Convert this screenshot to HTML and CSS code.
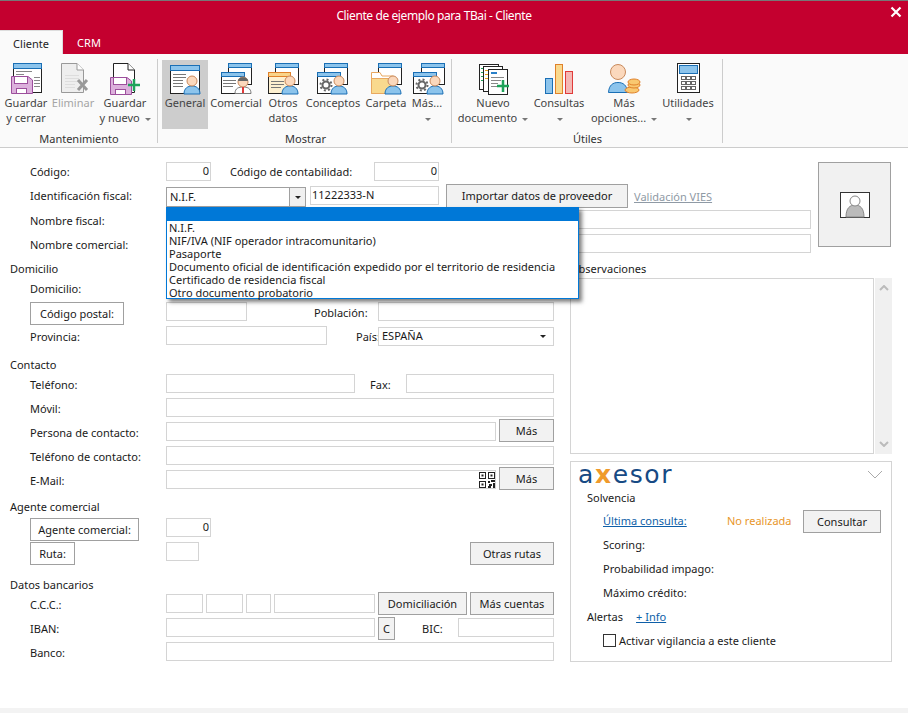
FILE: index.html
```html
<!DOCTYPE html>
<html lang="es">
<head>
<meta charset="utf-8">
<title>Cliente de ejemplo para TBai - Cliente</title>
<link rel="stylesheet" href="styles.css">
</head>
<body>
<svg class="sprite" aria-hidden="true">
  <defs>
    <g id="person"><path d="M-8 12C-8 6-4 4 0 4S8 6 8 12Z" fill="#8cc4ec" stroke="#1a6fb5"/><circle cy="-1" r="5" fill="#fbd8bc" stroke="#c98a5c"/></g>
    <g id="win"><rect x=".5" y=".5" width="23" height="21" fill="#fff" stroke="#222"/><rect x=".5" y=".5" width="23" height="4" fill="#8cc4ec" stroke="#1a6fb5"/></g>
    <g id="lines"><path d="M0 .5H13M0 3.5H13M0 6.5H10" stroke="#777" fill="none"/></g>
    <g id="gear"><circle r="3.5" fill="none" stroke="#666" stroke-width="2"/><circle r="5.5" fill="none" stroke="#666" stroke-width="2" stroke-dasharray="2 2.3"/></g>
    <g id="disk"><path d="M.5.5H17L21.500 4V17.500H.5Z" fill="#dcb0dc" stroke="#9c4f9c"/><rect x="3.500" y=".5" width="13" height="7" fill="#fff" stroke="#9c4f9c"/><rect x="5.500" y="12.500" width="10" height="5" fill="#fff" stroke="#9c4f9c"/></g>
  </defs>
</svg>

<header class="titlebar">
  <div class="caption">
    <span class="caption-text">Cliente de ejemplo para TBai - Cliente</span>
    <svg class="close" width="12" height="12" viewBox="0 0 12 12"><path d="M1.500 1.500L10.500 10.500M10.500 1.500L1.500 10.500" stroke="#fff" stroke-width="2.200"/></svg>
  </div>
  <nav class="tabs">
    <span class="tab tab-active">Cliente</span>
    <span class="tab">CRM</span>
  </nav>
</header>

<section class="ribbon">
  <div class="group group-a">
    <div class="buttons">
      <div class="rb w46">
        <svg class="ic" width="40" height="32" viewBox="0 0 40 32"><rect x="7.500" y=".5" width="28" height="29" fill="#fff" stroke="#222"/><rect x="7.500" y=".5" width="28" height="5" fill="#8cc4ec" stroke="#1a6fb5"/><path d="M10 8.500H26M10 11.500H18M28 14.500H34M28 17.500H34M28 20.500H34M28 23.500H34" stroke="#888"/><use href="#disk" x="5" y="13"/></svg>
        <span class="rt">Guardar</span><span class="rt">y cerrar</span>
      </div>
      <div class="rb w48 disabled">
        <svg class="ic" width="40" height="32" viewBox="0 0 40 32"><path d="M8.500.5H24L30.500 7V29.500H8.500Z" fill="#eee" stroke="#999"/><path d="M24 .5V7H30.500" fill="#fff" stroke="#999"/><path d="M12 12.500H26M12 15.500H26M12 18.500H26M12 21.500H22M12 24.500H22" stroke="#ddd"/><path d="M25 17L34 27M34 17L25 27" stroke="#999" stroke-width="3"/></svg>
        <span class="rt">Eliminar</span>
      </div>
      <div class="rb w56">
        <svg class="ic" width="40" height="32" viewBox="0 0 40 32"><path d="M8.500.5H23L29.500 7V29.500H8.500Z" fill="#fff" stroke="#222"/><path d="M23 .5V7H29.500" fill="#fff" stroke="#222"/><use href="#disk" x="5" y="14"/><path d="M29 16V28M23 22H35" stroke="#1fa35a" stroke-width="2.500"/></svg>
        <span class="rt">Guardar</span><span class="rt">y nuevo <i class="caret"></i></span>
      </div>
    </div>
    <div class="group-label">Mantenimiento</div>
  </div>

  <div class="group group-b">
    <div class="buttons">
      <div class="rb w46 selected">
        <svg class="ic" width="40" height="32" viewBox="0 0 40 32"><rect x="5.500" y="2.500" width="29" height="28" fill="#fff" stroke="#222"/><rect x="5.500" y="2.500" width="29" height="5" fill="#8cc4ec" stroke="#1a6fb5"/><use href="#lines" x="8" y="11"/><path d="M8 20.500H18M8 23.500H18" stroke="#777"/><use href="#person" x="27" y="19"/></svg>
        <span class="rt">General</span>
      </div>
      <div class="rb w56">
        <svg class="ic" width="40" height="32" viewBox="0 0 40 32"><use href="#win" x="12"/><use href="#win" x="5" y="9"/><use href="#lines" x="7" y="17"/><path d="M19 30.500C19 25 23 24 27 24S35 25 35 30.500Z" fill="#fff" stroke="#777"/><circle cx="27" cy="19" r="5" fill="#fbd8bc" stroke="#c98a5c"/><path d="M22 18C22 13 32 13 32 18Z" fill="#666"/><path d="M27 24V30" stroke="#e03a3a" stroke-width="2"/></svg>
        <span class="rt">Comercial</span>
      </div>
      <div class="rb w38">
        <svg class="ic" width="40" height="32" viewBox="0 0 40 32"><use href="#win" x="12"/><rect x="5.500" y="9.500" width="22" height="21" fill="#fdf0d0" stroke="#222"/><rect x="5.500" y="9.500" width="22" height="4" fill="#f9d48a" stroke="#e0812a"/><use href="#lines" x="8" y="18"/><use href="#person" x="27" y="19"/></svg>
        <span class="rt">Otros</span><span class="rt">datos</span>
      </div>
      <div class="rb w62">
        <svg class="ic" width="40" height="32" viewBox="0 0 40 32"><use href="#win" x="11"/><use href="#win" x="4" y="9"/><use href="#gear" x="13" y="22"/><use href="#person" x="26" y="19"/></svg>
        <span class="rt">Conceptos</span>
      </div>
      <div class="rb w44">
        <svg class="ic" width="40" height="32" viewBox="0 0 40 32"><use href="#win" x="12"/><path d="M5.500 30.500V9.500H14L16 13H27.500V30.500Z" fill="#fff" stroke="#e8a860"/><path d="M5.500 30.500V15.500H27.500V30.500Z" fill="#f9d98e" stroke="#e8a860"/><use href="#person" x="27" y="19"/></svg>
        <span class="rt">Carpeta</span>
      </div>
      <div class="rb w38">
        <svg class="ic" width="40" height="32" viewBox="0 0 40 32"><use href="#win" x="14"/><use href="#win" x="6" y="9"/><use href="#gear" x="15" y="22"/><use href="#person" x="28" y="19"/></svg>
        <span class="rt">Más...</span><span class="rt"><i class="caret"></i></span>
      </div>
    </div>
    <div class="group-label">Mostrar</div>
  </div>

  <div class="group group-c">
    <div class="buttons">
      <div class="rb w70">
        <svg class="ic" width="40" height="32" viewBox="0 0 40 32"><rect x="6.500" y="1.500" width="19" height="25" fill="#fff" stroke="#222"/><rect x="10.500" y="3.500" width="19" height="25" fill="#fff" stroke="#222"/><rect x="15.500" y="6.500" width="19" height="25" fill="#fff" stroke="#222"/><path d="M8 5.500H10M8 9.500H10M8 13.500H10M8 17.500H10" stroke="#1fa35a"/><path d="M12 7.500H15M12 11.500H15M12 15.500H15" stroke="#e8a020"/><path d="M18 10H24" stroke="#2a80c8" stroke-width="2"/><path d="M18 14.500H31M18 17.500H28M18 20.500H25M18 23.500H25" stroke="#888"/><path d="M30 17V29M24 23H36" stroke="#1fa35a" stroke-width="2.500"/></svg>
        <span class="rt">Nuevo</span><span class="rt">documento <i class="caret"></i></span>
      </div>
      <div class="rb w62">
        <svg class="ic" width="40" height="32" viewBox="0 0 40 32"><rect x="6.500" y="15.500" width="7" height="15" fill="#8cc4ec" stroke="#1a6fb5"/><rect x="16.500" y="1.500" width="7" height="29" fill="#f9d98e" stroke="#e0812a"/><rect x="26.500" y="8.500" width="7" height="22" fill="#f4b8b4" stroke="#e03a3a"/></svg>
        <span class="rt">Consultas</span><span class="rt"><i class="caret"></i></span>
      </div>
      <div class="rb w68">
        <svg class="ic" width="40" height="32" viewBox="0 0 40 32"><path d="M4.500 29.500C5 22 9 19.500 14 19.500S23 22 23.500 29.500Z" fill="#8cc4ec" stroke="#1a6fb5"/><circle cx="14" cy="9" r="7.500" fill="#fbd8bc" stroke="#c98a5c"/><g fill="#f9c870" stroke="#e0812a"><ellipse cx="28" cy="27" rx="7" ry="3"/><ellipse cx="30" cy="22" rx="6" ry="3"/><ellipse cx="30" cy="19" rx="6" ry="3"/></g></svg>
        <span class="rt">Más</span><span class="rt">opciones... <i class="caret"></i></span>
      </div>
      <div class="rb w60">
        <svg class="ic" width="40" height="32" viewBox="0 0 40 32"><rect x="9.500" y=".5" width="22" height="29" fill="#fff" stroke="#222"/><rect x="11.500" y="2.500" width="18" height="8" fill="#8cc4ec" stroke="#1a6fb5"/><g fill="#fff" stroke="#666"><rect x="13.500" y="13.500" width="4" height="3"/><rect x="18.500" y="13.500" width="4" height="3"/><rect x="23.500" y="13.500" width="4" height="3"/><rect x="13.500" y="18.500" width="4" height="3"/><rect x="18.500" y="18.500" width="4" height="3"/><rect x="23.500" y="18.500" width="4" height="3"/><rect x="13.500" y="23.500" width="4" height="3"/><rect x="18.500" y="23.500" width="4" height="3"/><rect x="23.500" y="23.500" width="4" height="3"/></g></svg>
        <span class="rt">Utilidades</span><span class="rt"><i class="caret"></i></span>
      </div>
    </div>
    <div class="group-label">Útiles</div>
  </div>
</section>

<main class="form">
  <div class="top">
    <div class="top-fields">
      <div class="row up">
        <span class="label">Código:</span>
        <div class="field num w45">0</div>
        <span class="label-inline">Código de contabilidad:</span>
        <div class="field num w65">0</div>
      </div>
      <div class="row up">
        <span class="label">Identificación fiscal:</span>
        <div class="combo w140"><span class="combo-text">N.I.F.</span><span class="combo-btn"><i class="caret dark"></i></span></div>
        <div class="field w129 ml4">11222333-N</div>
        <button class="btn btn-tall w182 ml7">Importar datos de proveedor</button>
        <a class="vies">Validación VIES</a>
      </div>
      <div class="row">
        <span class="label">Nombre fiscal:</span>
        <div class="field w645"></div>
      </div>
      <div class="row">
        <span class="label">Nombre comercial:</span>
        <div class="field w645"></div>
      </div>
    </div>
    <div class="photo">
      <svg width="30" height="26" viewBox="0 0 30 26"><rect x=".5" y=".5" width="29" height="25" fill="#fff" stroke="#333"/><path d="M6 25C6 16 10 13 15 13S24 16 24 25Z" fill="#bbb" stroke="#888"/><circle cx="15" cy="9" r="5" fill="#fff" stroke="#888"/></svg>
    </div>

    <div class="dropdown">
      <div class="dd-item dd-selected"></div>
      <div class="dd-item">N.I.F.</div>
      <div class="dd-item">NIF/IVA (NIF operador intracomunitario)</div>
      <div class="dd-item">Pasaporte</div>
      <div class="dd-item">Documento oficial de identificación expedido por el territorio de residencia</div>
      <div class="dd-item">Certificado de residencia fiscal</div>
      <div class="dd-item">Otro documento probatorio</div>
    </div>
  </div>

  <div class="lower">
    <div class="left">
      <div class="heading">Domicilio</div>
      <div class="row">
        <span class="label">Domicilio:</span>
        <div class="field grow"></div>
      </div>
      <div class="row">
        <span class="label label-btn"><button class="btn-label w94">Código postal:</button></span>
        <div class="field w81"></div>
        <span class="label-pob">Población:</span>
        <div class="field w176"></div>
      </div>
      <div class="row">
        <span class="label">Provincia:</span>
        <div class="field w161"></div>
        <span class="label-pais">País:</span>
        <div class="combo w176 combo-plain"><span class="combo-text">ESPAÑA</span><span class="combo-btn plain"><i class="caret dark"></i></span></div>
      </div>

      <div class="heading heading-contact">Contacto</div>
      <div class="row">
        <span class="label">Teléfono:</span>
        <div class="field w189"></div>
        <span class="label-fax">Fax:</span>
        <div class="field w148"></div>
      </div>
      <div class="row">
        <span class="label">Móvil:</span>
        <div class="field grow"></div>
      </div>
      <div class="row">
        <span class="label">Persona de contacto:</span>
        <div class="field w330"></div>
        <button class="btn b-up2 w55 ml3">Más</button>
      </div>
      <div class="row">
        <span class="label">Teléfono de contacto:</span>
        <div class="field grow"></div>
      </div>
      <div class="row">
        <span class="label">E-Mail:</span>
        <div class="field w330 qr-field">
          <svg class="qr" width="16" height="16" viewBox="0 0 16 16"><path d="M0 0H7V7H0ZM9 0H16V7H9ZM0 9H7V16H0Z" fill="#222"/><path d="M1 1H6V6H1ZM10 1H15V6H10ZM1 10H6V15H1Z" fill="#fff"/><path d="M2.500 2.500H4.500V4.500H2.500ZM11.500 2.500H13.500V4.500H11.500ZM2.500 11.500H4.500V13.500H2.500ZM9 9H11V11H9ZM12 8H16V10H12ZM10 12H13V14H10ZM14 11H16V16H14ZM9 14H12V16H9Z" fill="#222"/></svg>
        </div>
        <button class="btn b-up2 w55 ml3">Más</button>
      </div>

      <div class="heading heading-agent">Agente comercial</div>
      <div class="row row-agent">
        <span class="label label-btn"><button class="btn-label w109">Agente comercial:</button></span>
        <div class="field num w45">0</div>
      </div>
      <div class="row">
        <span class="label label-btn"><button class="btn-label w45">Ruta:</button></span>
        <div class="field w33"></div>
        <button class="btn b-down1 w84 push">Otras rutas</button>
      </div>

      <div class="heading heading-bank">Datos bancarios</div>
      <div class="row">
        <span class="label">C.C.C.:</span>
        <div class="field w37"></div>
        <div class="field w37 ml3"></div>
        <div class="field w25 ml3"></div>
        <div class="field w101 ml3"></div>
        <button class="btn b-up1 w89 ml3">Domiciliación</button>
        <button class="btn b-up1 w84 ml3">Más cuentas</button>
      </div>
      <div class="row">
        <span class="label">IBAN:</span>
        <div class="field w209"></div>
        <button class="btn w17 ml3">C</button>
        <span class="label-bic">BIC:</span>
        <div class="field w96"></div>
      </div>
      <div class="row">
        <span class="label">Banco:</span>
        <div class="field grow"></div>
      </div>
    </div>

    <aside class="right">
      <div class="heading">Observaciones</div>
      <div class="notes">
        <div class="notes-text"></div>
        <div class="scroll">
          <svg width="10" height="6" viewBox="0 0 10 6"><path d="M1 5L5 1L9 5" fill="none" stroke="#bbb" stroke-width="2"/></svg>
          <svg width="10" height="6" viewBox="0 0 10 6"><path d="M1 1L5 5L9 1" fill="none" stroke="#bbb" stroke-width="2"/></svg>
        </div>
      </div>
      <div class="panel">
        <div class="panel-head">
          <span class="logo">a<span class="logo-x">x</span>esor</span>
          <svg width="16" height="9" viewBox="0 0 16 9"><path d="M1 1L8 8L15 1" fill="none" stroke="#aaa"/></svg>
        </div>
        <div class="p-row p-first">Solvencia</div>
        <div class="p-row sub">
          <a class="link w124">Última consulta:</a>
          <span class="status">No realizada</span>
          <button class="btn b-down1 w78">Consultar</button>
        </div>
        <div class="p-row sub">Scoring:</div>
        <div class="p-row sub">Probabilidad impago:</div>
        <div class="p-row sub">Máximo crédito:</div>
        <div class="p-row">Alertas<a class="link info">+ Info</a></div>
        <div class="p-row sub"><span class="check"></span>Activar vigilancia a este cliente</div>
      </div>
    </aside>
  </div>
</main>

<footer class="bottom"></footer>
</body>
</html>
```
FILE: styles.css
```css
* { box-sizing: border-box; }
html, body { margin: 0; padding: 0; }
body {
  width: 908px;
  height: 713px;
  overflow: hidden;
  position: relative;
  background: #fff;
  color: #1a1a1a;
  font-family: "Noto Sans", sans-serif;
  font-size: 11px;
}
.sprite { position: absolute; width: 0; height: 0; }

/* title bar */
.titlebar {
  height: 54px;
  background: #c4002f;
  border-top: 1px solid #777;
  color: #fff;
}
.caption {
  height: 29px;
  display: flex;
  align-items: center;
  justify-content: center;
  padding-right: 40px;
  position: relative;
}
.caption-text { font-size: 12px; letter-spacing: -.4px; margin-top: -1px; }
.close { position: absolute; right: 6px; top: 5px; }
.tabs { display: flex; height: 24px; }
.tab { padding-top: 5px; text-align: center; width: 52px; font-size: 11px; }
.tab-active {
  width: 63px;
  background: #fafafa;
  color: #222;
  border-right: 1px solid #ddd;
  border-top: 1px solid #ddd;
}

/* ribbon */
.ribbon {
  height: 94px;
  display: flex;
  background: #fafafa;
  border-bottom: 1px solid #ccc;
  padding-top: 5px;
  color: #444;
}
.group {
  height: 84px;
  border-right: 1px solid #ccc;
  position: relative;
}
.group-a { width: 158px; padding-left: 3px; }
.group-b { width: 294px; padding-left: 4px; }
.group-c { width: 271px; padding-left: 6px; }
.buttons { display: flex; margin-top: 1px; height: 69px; }
.rb {
  display: flex;
  flex-direction: column;
  align-items: center;
  padding-top: 3px;
  flex: none;
}
.rb.selected { background: #cdcdcd; }
.rb.disabled { color: #a5a5a5; }
.ic { display: block; flex: none; }
.rt { display: block; line-height: 15px; height: 15px; white-space: nowrap; }
.group-label { text-align: center; line-height: 15px; color: #333; padding: 2px 2px 0 0; }
.group-c .group-label { padding-right: 5px; }
.caret {
  display: inline-block;
  width: 0;
  height: 0;
  border: 3px solid transparent;
  border-top: 3px solid #777;
  border-bottom: 0;
  vertical-align: middle;
  margin-left: 2px;
}
.caret.dark { border-top-color: #222; margin: 0; }

.w17 { width: 17px; } .w25 { width: 25px; } .w33 { width: 33px; } .w37 { width: 37px; }
.w38 { width: 38px; } .w44 { width: 44px; } .w45 { width: 45px; } .w46 { width: 46px; }
.w48 { width: 48px; } .w55 { width: 55px; } .w56 { width: 56px; } .w60 { width: 60px; }
.w62 { width: 62px; } .w65 { width: 65px; } .w68 { width: 68px; } .w70 { width: 70px; }
.w78 { width: 78px; } .w81 { width: 81px; } .w84 { width: 84px; } .w89 { width: 89px; }
.w94 { width: 94px; } .w96 { width: 96px; } .w101 { width: 101px; } .w109 { width: 109px; }
.w124 { width: 124px; } .w129 { width: 129px; } .w140 { width: 140px; } .w148 { width: 148px; }
.w161 { width: 161px; } .w176 { width: 176px; } .w182 { width: 182px; } .w189 { width: 189px; }
.w209 { width: 209px; } .w330 { width: 330px; } .w645 { width: 645px; }
.ml3 { margin-left: 3px; } .ml4 { margin-left: 4px; } .ml7 { margin-left: 7px; }

/* form */
.form { padding-top: 12px; }
.top { display: flex; position: relative; height: 96px; }
.top-fields { width: 811px; flex: none; }
.row {
  display: flex;
  align-items: center;
  height: 24px;
  padding-left: 30px;
}
.row.up, .left .row { padding-bottom: 2px; }
.row-agent { margin-top: 1px; }
.label { width: 136px; flex: none; white-space: nowrap; }
.label-btn { align-self: flex-start; margin-top: 1px; }
.label-inline { margin-left: 19px; width: 144px; flex: none; white-space: nowrap; }
.label-pob { width: 131px; padding-left: 67px; flex: none; white-space: nowrap; }
.label-pais { width: 51px; padding-left: 29px; flex: none; white-space: nowrap; }
.label-fax { width: 51px; padding-left: 15px; flex: none; white-space: nowrap; }
.label-bic { width: 63px; padding-left: 27px; flex: none; white-space: nowrap; }
.field {
  height: 19px;
  border: 1px solid #d4d4d4;
  background: #fff;
  padding: 0 1px;
  line-height: 16px;
  flex: none;
  position: relative;
  align-self: flex-start;
  margin-top: 1px;
}
.top-fields .field { margin-top: 2px; }
.field.num { text-align: right; }
.field.grow { width: 388px; }
.combo {
  height: 20px;
  display: flex;
  border: 1px solid #a0a0a0;
  flex: none;
  background: #fff;
  align-self: flex-start;
  margin-top: 3px;
}
.combo-plain { border-color: #d4d4d4; height: 19px; margin-top: 2px; }
.combo-text { flex: 1; padding-left: 3px; line-height: 17px; }
.combo-plain .combo-text { line-height: 15px; }
.combo-btn {
  width: 16px;
  background: #f0f0f0;
  border-left: 1px solid #a0a0a0;
  display: flex;
  align-items: center;
  justify-content: center;
}
.combo-btn.plain { background: #fff; border-left: 0; width: 20px; }
.btn, .btn-label {
  height: 23px;
  flex: none;
  border: 1px solid #a0a0a0;
  background: #f2f2f2;
  color: #1a1a1a;
  font: inherit;
  padding: 0;
  text-align: center;
  align-self: flex-start;
}
.btn-tall { height: 24px; padding-bottom: 2px; }
.b-up2 { margin-top: -2px; }
.b-up1 { margin-top: -1px; }
.b-down1 { margin-top: 1px; }
.btn-label { background: #fff; display: block; }
.push { margin-left: auto; }
.vies {
  margin-left: 6px;
  color: #8f9aa5;
  text-decoration: underline;
  margin-top: 2px;
}
.photo {
  width: 73px;
  height: 85px;
  margin: 2px 0 0 7px;
  border: 1px solid #a0a0a0;
  background: #f1f1f1;
  display: flex;
  align-items: center;
  justify-content: center;
  flex: none;
}
.dropdown {
  position: absolute;
  left: 166px;
  top: 47px;
  width: 413px;
  height: 92px;
  background: #fff;
  border: 1px solid #0078d7;
  border-top: 0;
  box-shadow: 3px 3px 4px rgba(0,0,0,.5);
  z-index: 5;
}
.dd-item { height: 13px; line-height: 13px; padding-left: 2px; white-space: nowrap; }
.dd-selected { height: 14px; background: #0078d7; }

.lower { display: flex; }
.left { width: 554px; flex: none; }
.right { width: 322px; margin-left: 16px; flex: none; }
.heading {
  height: 17px;
  line-height: 18px;
  margin-top: 4px;
  padding-left: 10px;
}
.heading-contact { margin-top: 7px; }
.heading-agent { margin-top: 5px; height: 18px; line-height: 18px; }
.heading-bank { margin-top: 11px; height: 17px; }
.right .heading { padding-left: 0; }
.qr { position: absolute; right: 0; top: 1px; }
.notes { display: flex; height: 176px; margin-top: 1px; }
.notes-text { width: 304px; border: 1px solid #d4d4d4; background: #fff; }
.scroll {
  width: 17px;
  margin-left: 1px;
  background: #f0f0f0;
  display: flex;
  flex-direction: column;
  justify-content: space-between;
  align-items: center;
  padding: 7px 0;
}
.panel {
  margin-top: 7px;
  width: 322px;
  height: 201px;
  border: 1px solid #d4d4d4;
}
.panel-head {
  height: 24px;
  padding: 0 8px 0 7px;
  display: flex;
  justify-content: space-between;
  align-items: center;
}
.logo {
  font-family: "DejaVu Sans", sans-serif;
  font-size: 25px;
  line-height: 24px;
  letter-spacing: 1.6px;
  color: #174a84;
  margin-top: 1px;
}
.logo-x { color: #ef9a2c; font-weight: bold; }
.p-row {
  height: 24px;
  display: flex;
  align-items: center;
  padding-left: 16px;
  padding-bottom: 2px;
  white-space: nowrap;
}
.p-row.p-first { height: 23px; padding-bottom: 1px; }
.p-row.sub { padding-left: 32px; }
.p-row .btn { align-self: flex-start; }
.link { color: #0e5fa8; text-decoration: underline; }
.info { margin-left: 13px; }
.status { width: 76px; color: #e8962a; flex: none; }
.check {
  width: 13px;
  height: 13px;
  border: 1px solid #333;
  margin-right: 3px;
  flex: none;
}
.bottom {
  position: absolute;
  left: 0;
  right: 0;
  bottom: 0;
  height: 5px;
  background: #f3f3f3;
}
```
